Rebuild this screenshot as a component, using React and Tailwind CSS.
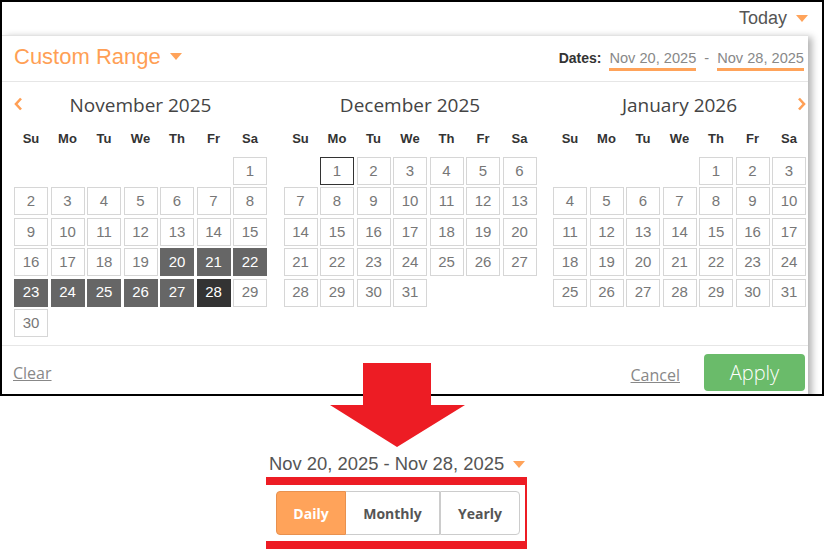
import React from 'react';

const ORANGE = 'text-[#ff9f55]';

const Caret = ({ className = '' }) => (
  <svg width="12" height="7" viewBox="0 0 12 7" className={className}>
    <path d="M0 0 L12 0 L6 7 Z" fill="#ffa35a" />
  </svg>
);

const Chevron = ({ dir }) => (
  <svg width="9" height="14" viewBox="0 0 9 14">
    <path
      d={dir === 'left' ? 'M7 1.5 L2 7 L7 12.5' : 'M2 1.5 L7 7 L2 12.5'}
      stroke="#ff9f55"
      strokeWidth="2.6"
      fill="none"
    />
  </svg>
);

const months = [
  { name: 'November 2025', offset: 6, days: 30, nav: 'left' },
  { name: 'December 2025', offset: 1, days: 31 },
  { name: 'January 2026', offset: 4, days: 31, nav: 'right' },
];

const dayNames = ['Su', 'Mo', 'Tu', 'We', 'Th', 'Fr', 'Sa'];

const cellClass = (mi, d) => {
  if (mi === 0 && d === 28) return 'bg-[#333] border-[#333] text-white';
  if (mi === 0 && d >= 20 && d <= 27) return 'bg-[#666] border-[#666] text-white';
  if (mi === 1 && d === 1) return 'border-[#333] text-[#777]';
  return 'border-[#d6d6d6] text-[#777]';
};

const Month = ({ month, mi }) => {
  const blanks = Array.from({ length: month.offset });
  const days = Array.from({ length: month.days }, (_, i) => i + 1);
  return (
    <div className="w-[253px]">
      <div className="grid grid-cols-[20px_1fr_20px] items-center h-[24px] mt-[9px]">
        <div className="flex items-center -mt-[3px]">{month.nav === 'left' && <Chevron dir="left" />}</div>
        <div className="text-center text-[19px] text-[#444] font-['Open_Sans',sans-serif]">{month.name}</div>
        <div className="flex items-center justify-end -mt-[3px]">{month.nav === 'right' && <Chevron dir="right" />}</div>
      </div>
      <div className="grid grid-cols-[repeat(7,34px)] gap-x-[2.5px] mt-[14px] h-[20px] items-center">
        {dayNames.map((n) => (
          <div key={n} className="text-center text-[13px] font-bold text-[#333]">{n}</div>
        ))}
      </div>
      <div className="grid grid-cols-[repeat(7,34px)] gap-x-[2.5px] gap-y-[2.4px] mt-[8px]">
        {blanks.map((_, i) => (
          <div key={'b' + i} />
        ))}
        {days.map((d) => (
          <div
            key={d}
            className={`h-[28px] border flex items-center justify-center text-[15px] ${cellClass(mi, d)}`}
          >
            {d}
          </div>
        ))}
      </div>
    </div>
  );
};

export default function App() {
  return (
    <div className="relative w-[824px] h-[550px] bg-white font-['Liberation_Sans',Arial,sans-serif]">
      {/* Screenshot frame */}
      <div className="w-[824px] h-[396px] border-2 border-black overflow-hidden">
        <div className="h-[33px] flex items-center justify-end pr-[14px] gap-[9px]">
          <span className="text-[18px] text-[#555]">Today</span>
          <Caret />
        </div>

        <div className="w-[806px] bg-white border-t border-[#e3e3e3] shadow-[4px_2px_7px_rgba(0,0,0,0.3)]">
          {/* Header */}
          <div className="h-[46px] border-b border-[#e6e6e6] flex items-center justify-between pl-[12px] pr-[4px]">
            <div className="flex items-center gap-[9px] -mt-[5px]">
              <span className={`text-[22px] ${ORANGE}`}>Custom Range</span>
              <Caret />
            </div>
            <div className="flex items-center">
              <span className="text-[14px] font-bold text-[#333] mr-[8px]">Dates:</span>
              <span className="text-[14.6px] text-[#888] border-b-[3px] border-[#ffa35a] pt-[3px] pb-[1px] leading-[18px]">Nov 20, 2025</span>
              <span className="text-[14.6px] text-[#888] mx-[8px]">-</span>
              <span className="text-[14.6px] text-[#888] border-b-[3px] border-[#ffa35a] pt-[3px] pb-[1px] leading-[18px]">Nov 28, 2025</span>
            </div>
          </div>

          {/* Calendars */}
          <div className="h-[264px] border-b border-[#e6e6e6] flex gap-[16.5px] pl-[12px]">
            {months.map((m, i) => (
              <Month key={m.name} month={m} mi={i} />
            ))}
          </div>

          {/* Footer */}
          <div className="h-[60px] flex items-start justify-between pl-[11px] pr-[3px] pt-[8px] font-['Open_Sans',sans-serif]">
            <span className="text-[16px] text-[#888] underline mt-[7px]">Clear</span>
            <div className="flex items-start">
              <span className="text-[16px] text-[#888] underline mt-[9px] mr-[24px]">Cancel</span>
              <button className="w-[101px] h-[37px] rounded-[4px] bg-[#6abb6a] text-white text-[20px] font-light leading-none">
                Apply
              </button>
            </div>
          </div>
        </div>
      </div>

      {/* Red arrow overlay */}
      <svg className="absolute left-[330px] top-[363px]" width="136" height="85" viewBox="0 0 136 85">
        <path d="M33 0 H101 V42 H135 L67 84 L0 42 H33 Z" fill="#ed1c24" />
      </svg>

      {/* Result */}
      <div className="pl-[269px] pt-[57px] h-[22px] box-content flex items-center gap-[9px]">
        <span className="text-[18.4px] text-[#555] leading-[22px]">Nov 20, 2025 - Nov 28, 2025</span>
        <Caret />
      </div>
      <div className="ml-[266px] mt-[2px] w-[261px] h-[72px] border-t-[8px] border-b-[8px] border-r-[2px] border-[#ed1c24] pt-[6px] pl-[10px]">
        <div className="flex w-[244px] h-[44px] font-['Open_Sans',sans-serif] text-[14px] font-bold">
          <div className="w-[70px] flex items-center justify-center bg-[#ffa35a] border border-[#e8914f] rounded-l-[4px] text-white">
            Daily
          </div>
          <div className="w-[94px] flex items-center justify-center border-y border-r border-[#ccc] text-[#555]">
            Monthly
          </div>
          <div className="w-[80px] flex items-center justify-center border-y border-r border-l border-[#ccc] rounded-r-[4px] text-[#555]">
            Yearly
          </div>
        </div>
      </div>
    </div>
  );
}
